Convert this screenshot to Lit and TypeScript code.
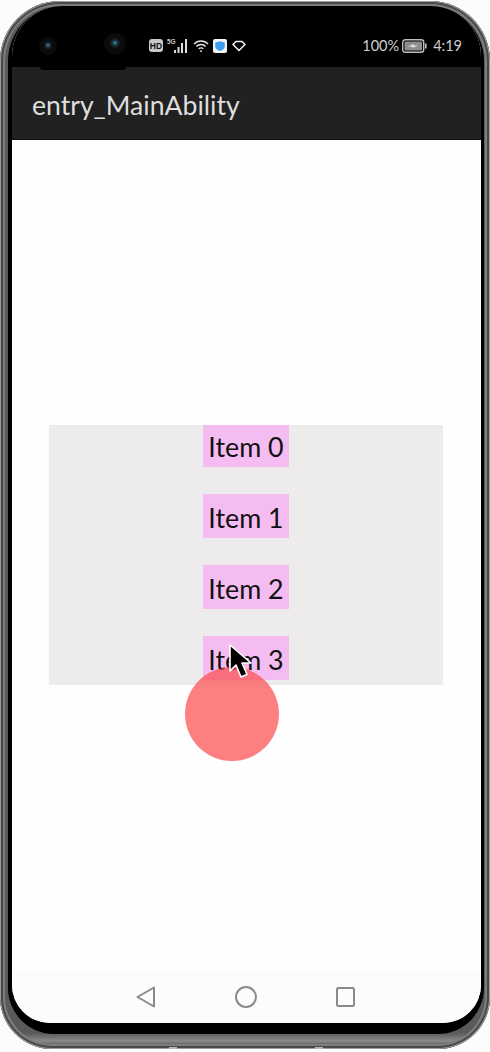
import { LitElement, html, css } from "lit";
import { customElement } from "lit/decorators.js";

@customElement("app-root")
export class AppRoot extends LitElement {
  static styles = css`
    :host { display: block; width: 490px; height: 1052px; background: #fcfcfc; overflow: hidden; font-family: Lato, "Noto Sans", "Liberation Sans", sans-serif; }
    * { box-sizing: border-box; }
    .phone { position: relative; width: 490px; height: 1048px; margin-top: 1px; padding: 5px 6px 15px 8px; border-radius: 60px 60px 52px 52px;
      background: linear-gradient(180deg, #6f6f6f 0, #5a5a5a 6px, #5a5a5a 1032px, #8a8a8a 1040px, #4a4a4a 1046px, #6a5c50 1048px);
      box-shadow: inset 0 0 0 1px #9c9c9c, inset 0 0 0 3px #484848, inset 0 0 0 5px #7d7d7d; }
    .body { height: 100%; padding: 0 3px 11px 4px; border-radius: 55px 55px 46px 46px; background: #000; }
    .screen { position: relative; height: 1017px; display: flex; flex-direction: column; overflow: hidden; border-radius: 50px 50px 38px 38px; background: #fefefe; }
    .status { flex: 0 0 61px; background: #000; display: flex; align-items: center; padding: 18px 19px 0 27px; color: #cfcfcf; font-size: 14.5px; }
    .cams { display: flex; gap: 47px; align-items: center; width: 110px; }
    .cam { width: 18px; height: 18px; border-radius: 50%; background: radial-gradient(circle at 50% 45%, #4d93ad 0, #1d3a46 14%, #0d0d0d 32%, #050505 100%); }
    .cam.big { width: 22px; height: 22px; margin-top: -3px; }
    .icons { display: flex; align-items: center; gap: 4px; }
    .grow { flex: 1; }
    .right { display: flex; align-items: center; gap: 3px; }
    .time { margin-left: 3px; }
    .appbar { position: relative; flex: 0 0 73px; background: #212121; border-bottom: 1px solid #111; color: #dedede; font-size: 26.6px; display: flex; align-items: center; padding: 3px 0 0 20px; }
    .notch { position: absolute; left: 28px; top: 0; width: 86px; height: 3px; background: #000; border-radius: 0 0 10px 10px; }
    .content { flex: 1; display: flex; flex-direction: column; padding: 285px 38px 0 37px; }
    .list { position: relative; height: 260px; background: #edebec; display: flex; flex-direction: column; align-items: center; gap: 27px; overflow: hidden; }
    .item { flex: none; width: 86px; height: 44px; background: #f5bcf2; color: #111; font-size: 26.8px; padding-top: 4px; display: flex; align-items: center; justify-content: center; white-space: nowrap; }
    .item:first-child { margin-top: -2px; }
    .nav { flex: 0 0 52px; background: #fcfcfc; display: flex; justify-content: center; align-items: center; gap: 79px; padding: 0 3px 1px 0; }
    .nav svg { display: block; }
    .circle { position: absolute; left: 173px; top: 661px; width: 94px; height: 94px; border-radius: 50%; background: rgba(252, 76, 76, 0.71); }
    .cursor { position: absolute; left: 215px; top: 636px; }
    .btn { position: absolute; bottom: 0; width: 8px; height: 2px; background: #bdb7bd; }
  `;

  render() {
    return html`
      <div class="phone">
        <div class="body">
          <div class="screen">
            <div class="status">
              <div class="cams"><div class="cam"></div><div class="cam big"></div></div>
              <div class="icons">
                <svg width="14" height="13" viewBox="0 0 14 13"><rect width="14" height="13" rx="3" fill="#c8c8c8"/><text x="7" y="10" font-size="8.500" font-weight="700" text-anchor="middle" fill="#111" font-family="Liberation Sans">HD</text></svg>
                <svg width="22" height="15" viewBox="0 0 22 15"><text x="0" y="6" font-size="6.500" font-weight="700" fill="#ccc" font-family="Liberation Sans">5G</text><g fill="#ddd"><rect x="7" y="12" width="2" height="3"/><rect x="10.500" y="9" width="2" height="6"/><rect x="14" y="5" width="2" height="10"/><rect x="18" y="1" width="2" height="14"/></g></svg>
                <svg width="16" height="14" viewBox="0 0 17 14" fill="none" stroke="#e4e4e4" stroke-width="1.500"><path d="M1 5a10 10 0 0 1 15 0"/><path d="M3.500 7.500a7 7 0 0 1 10 0"/><path d="M6 10a3.500 3.500 0 0 1 5 0"/><circle cx="8.500" cy="12.500" r="1" fill="#e4e4e4" stroke="none"/></svg>
                <svg width="14" height="14" viewBox="0 0 14 14"><rect width="14" height="14" rx="2" fill="#f4f4f4"/><path d="M7 2.200l4.800 1.400v3.600c0 2.400-2.200 4-4.800 4.800-2.600-.8-4.800-2.400-4.800-4.800V3.600z" fill="#3f9df0"/></svg>
                <svg width="14" height="12" viewBox="0 0 14 12" fill="none" stroke="#f0f0f0" stroke-width="1.600" style="margin-left:1px"><path d="M4 1.500h6l3 3L7 10.500 1 4.500z" stroke-linejoin="round"/></svg>
              </div>
              <div class="grow"></div>
              <div class="right">
                <span>100%</span>
                <svg width="25" height="14" viewBox="0 0 25 14"><rect x=".7" y=".7" width="21" height="12.600" rx="2.500" fill="none" stroke="#bdbdbd" stroke-width="1.400"/><rect x="2.500" y="2.500" width="17.500" height="9" rx="1" fill="#8d8d8d"/><path d="M6 7.400l6-2.400-.8 1.500H16l-6 2.500.8-1.600z" fill="#eee"/><rect x="23" y="4.500" width="1.600" height="5" fill="#bdbdbd"/></svg>
                <span class="time">4:19</span>
              </div>
            </div>
            <div class="appbar"><div class="notch"></div>entry_MainAbility</div>
            <div class="content">
              <div class="list">
                ${[0, 1, 2, 3].map((i) => html`<div class="item">Item ${i}</div>`)}
              </div>
            </div>
            <div class="nav">
              <svg width="20" height="22" viewBox="0 0 20 22" fill="none" stroke="#8a8a8a" stroke-width="2" stroke-linejoin="round"><path d="M18 1.500v19L1.500 11z"/></svg>
              <svg width="22" height="22" viewBox="0 0 22 22" fill="none" stroke="#8a8a8a" stroke-width="2"><circle cx="11" cy="11" r="10"/></svg>
              <svg width="19" height="20" viewBox="0 0 19 20" fill="none" stroke="#8a8a8a" stroke-width="2"><rect x="1" y="1" width="17" height="18" rx="1.500"/></svg>
            </div>
            <div class="circle"></div>
            <svg class="cursor" width="26" height="38" viewBox="0 0 26 38"><path d="M3 3v26l6-6 5 12 6-2.500-5-11.500h9z" fill="#000" stroke="#fff" stroke-width="1.600" stroke-linejoin="round"/></svg>
          </div>
        </div>
        <div class="btn" style="left:169px"></div>
        <div class="btn" style="left:315px"></div>
      </div>
    `;
  }
}
